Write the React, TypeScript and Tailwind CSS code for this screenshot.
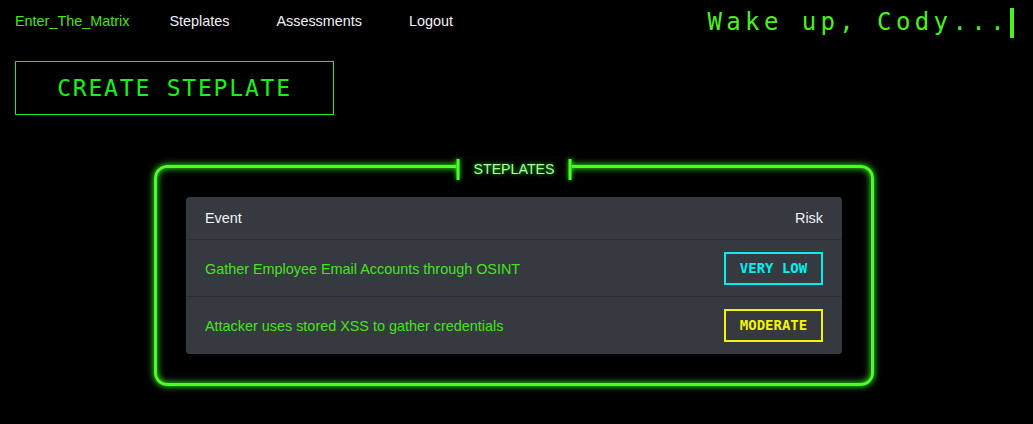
export default function App() {
  const rows = [
    { event: "Gather Employee Email Accounts through OSINT", risk: "VERY LOW", tone: "border-[#00f0f0] text-[#00f0f0]" },
    { event: "Attacker uses stored XSS to gather credentials", risk: "MODERATE", tone: "border-[#f5f500] text-[#f5f500]" },
  ];

  return (
    <div className="min-h-screen bg-black font-['Liberation_Sans',Arial,sans-serif] text-[14.4px]">
      {/* Nav */}
      <header className="flex h-[44px] items-center pl-[15px] pr-[19px]">
        <span className="mr-[40px] text-[#47e31a]">Enter_The_Matrix</span>
        <nav className="flex items-center gap-[47px] text-[#f2f2f5]">
          <a>Steplates</a>
          <a>Assessments</a>
          <a>Logout</a>
        </nav>
        <div className="ml-auto flex items-center">
          <span className="font-['DejaVu_Sans_Mono',monospace] text-[24px] leading-none tracking-[4.4px] text-[#4cf01c]">
            Wake up, Cody...
          </span>
          <span className="ml-[1px] mt-[1px] h-[30px] w-[4px] bg-[#4cf01c]" />
        </div>
      </header>

      {/* Create button */}
      <div className="mt-[17px] pl-[15px]">
        <button className="flex h-[54px] w-[319px] items-center justify-center border border-[#1aee1a] font-['DejaVu_Sans_Mono',monospace] text-[23px] tracking-[1.8px] text-[#1af01a]">
          CREATE STEPLATE
        </button>
      </div>

      {/* Steplates frame */}
      <section className="relative ml-[154px] mt-[50px] w-[720px] rounded-[13px] border-[3px] border-[#4dff2a] p-[29px] shadow-[0_0_7px_#3cff1e,inset_0_0_7px_#3cff1e]">
        <div className="absolute left-1/2 top-[-9px] flex h-[21px] -translate-x-1/2 items-center bg-black">
          <span className="h-[21px] w-[3px] bg-[#4dff2a] shadow-[0_0_5px_#3cff1e]" />
          <span className="px-[14px] text-[14.2px] text-[#a8ff9c] [text-shadow:0_0_4px_#2fe81a]">STEPLATES</span>
          <span className="h-[21px] w-[3px] bg-[#4dff2a] shadow-[0_0_5px_#3cff1e]" />
        </div>

        <div className="flex flex-col gap-px rounded-[4px] bg-[#2a2e33]">
          <div className="rounded-t-[4px] bg-[#343a40]">
            <div className="flex h-[43px] items-center justify-between border-b border-[#2b3035] px-[19px] pt-[2px] text-[#f4f4fa]">
              <span>Event</span>
              <span>Risk</span>
            </div>
            <Row {...rows[0]} h="h-[56px]" />
          </div>
          <div className="rounded-b-[4px] bg-[#343a40]">
            <Row {...rows[1]} h="h-[57px]" />
          </div>
        </div>
      </section>
    </div>
  );
}

function Row({ event, risk, tone, h }: { event: string; risk: string; tone: string; h: string }) {
  return (
    <div className={`flex ${h} items-center justify-between pl-[19px] pr-[19px]`}>
      <span className="pt-[3px] text-[#47e31a]">{event}</span>
      <span
        className={`flex h-[33px] w-[99px] items-center justify-center border-2 font-['DejaVu_Sans_Mono',monospace] text-[14px] font-bold ${tone}`}
      >
        {risk}
      </span>
    </div>
  );
}
